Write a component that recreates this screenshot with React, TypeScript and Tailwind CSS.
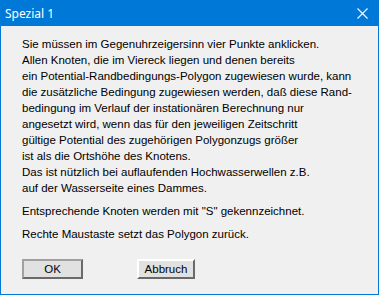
export default function App() {
  const para1 = [
    "Sie müssen im Gegenuhrzeigersinn vier Punkte anklicken.",
    "Allen Knoten, die im Viereck liegen und denen bereits",
    "ein Potential-Randbedingungs-Polygon zugewiesen wurde, kann",
    "die zusätzliche Bedingung zugewiesen werden, daß diese Rand-",
    "bedingung im Verlauf der instationären Berechnung nur",
    "angesetzt wird, wenn das für den jeweiligen Zeitschritt",
    "gültige Potential des zugehörigen Polygonzugs größer",
    "ist als die Ortshöhe des Knotens.",
    "Das ist nützlich bei auflaufenden Hochwasserwellen z.B.",
    "auf der Wasserseite eines Dammes.",
  ];

  return (
    <div className="w-[379px] h-[295px] bg-[#f0f0f0] border border-[#0078d7] flex flex-col font-['Liberation_Sans',Arial,sans-serif] text-black">
      {/* Title bar */}
      <div className="h-[25px] bg-[#0078d7] flex items-center justify-between pl-[4px] pr-[10px] text-white">
        <span className="text-[12px] font-['Noto_Sans',sans-serif] leading-none">Spezial 1</span>
        <svg width="11" height="11" viewBox="0 0 11 11" className="text-white">
          <path d="M0.5 0.5 L10.5 10.5 M10.5 0.5 L0.5 10.5" stroke="currentColor" strokeWidth="1.1" />
        </svg>
      </div>

      {/* Body */}
      <div className="flex-1 pl-[21px] pt-[10px] text-[11.5px] leading-[16px]">
        {para1.map((line) => (
          <div key={line}>{line}</div>
        ))}
        <div className="mt-[7px]">Entsprechende Knoten werden mit "S" gekennzeichnet.</div>
        <div className="mt-[7px]">Rechte Maustaste setzt das Polygon zurück.</div>

        <div className="flex gap-[54px] mt-[17px]">
          <button className="w-[61px] h-[20px] bg-[#e1e1e1] border-2 border-[#696969] border-t-[#a0a0a0] border-l-[#a0a0a0] flex items-center justify-center text-[11.5px]">
            OK
          </button>
          <button className="w-[58px] h-[20px] bg-[#e1e1e1] border-2 border-[#696969] border-t-white border-l-white flex items-center justify-center text-[11.5px]">
            Abbruch
          </button>
        </div>
      </div>
    </div>
  );
}
